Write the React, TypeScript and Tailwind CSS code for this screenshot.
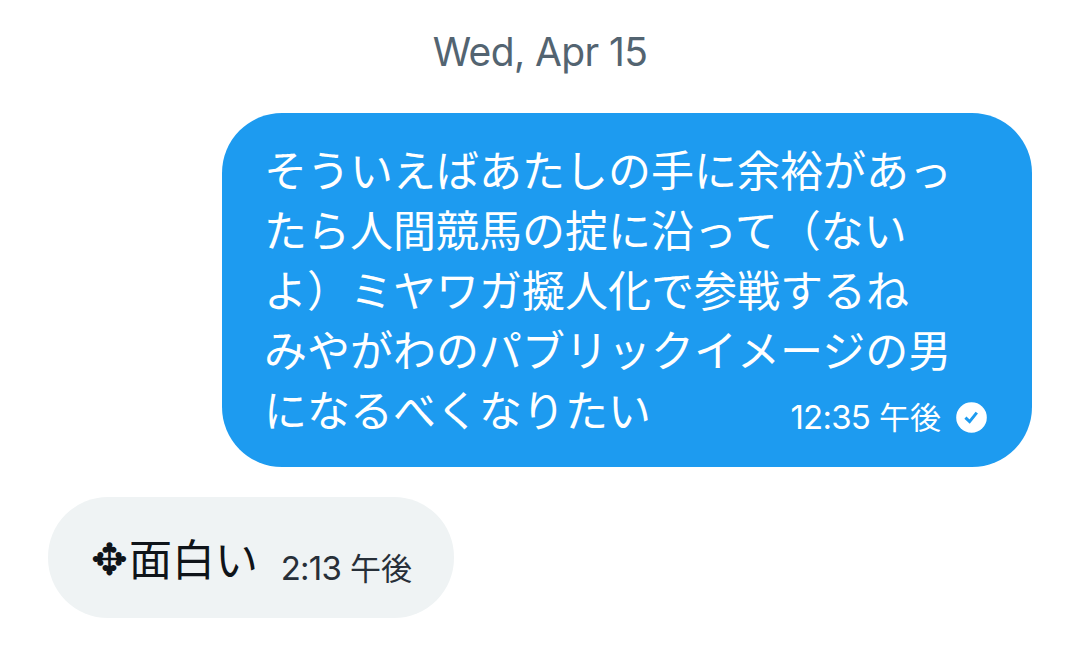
type TimeProps = {
  time: string;
  period: string;
};

const sentLines = [
  'そういえばあたしの手に余裕があっ',
  'たら人間競馬の掟に沿って（ない',
  'よ）ミヤワガ擬人化で参戦するね',
  'みやがわのパブリックイメージの男',
  'になるべくなりたい',
];

function MessageTime({ time, period }: TimeProps) {
  return (
    <span className="flex items-baseline gap-[9px] leading-[43px] whitespace-nowrap">
      <span className="text-[33px] tracking-[-0.8px]">{time}</span>
      <span className="text-[31px]">{period}</span>
    </span>
  );
}

function SentIcon() {
  return (
    <svg className="size-[31px]" viewBox="0 0 31 31" fill="none">
      <circle cx="15.5" cy="15.5" r="15.3" fill="white" />
      <path d="M9.4 15.6 L13.6 19.6 L20.8 10.6" stroke="#1d9bf0" strokeWidth="3" />
    </svg>
  );
}

export default function App() {
  return (
    <main className="flex h-[663px] w-full flex-col overflow-hidden bg-white pt-[30px] font-['Inter','Noto_Sans_CJK_JP',sans-serif]">
      <div className="text-center text-[39px] leading-[43px] tracking-[-0.6px] text-[#536471]">Wed, Apr 15</div>

      {/* Sent message */}
      <div className="mt-10 mr-12 flex h-[354px] w-[810px] items-end justify-between self-end rounded-[60px] bg-[#1d9bf0] pr-[45px] pb-[26px] pl-[42px] text-white">
        <div className="w-0 text-[43px] leading-[60px] whitespace-nowrap">
          {sentLines.map((line) => (
            <div key={line}>{line}</div>
          ))}
        </div>
        <div className="flex items-center gap-[15px] pb-[2px]">
          <MessageTime time="12:35" period="午後" />
          <SentIcon />
        </div>
      </div>

      {/* Received message */}
      <div className="mt-[30px] ml-12 flex h-[121px] w-[406px] items-end justify-between rounded-[60px] bg-[#eff3f4] pr-[42px] pb-[28px] pl-[43px]">
        <div className="flex items-center text-[43px] leading-[60px] whitespace-nowrap text-[#0f1419]">
          <span className="w-[38px] font-['DejaVu_Sans',sans-serif] text-[44px]">✥</span>
          <span>面白い</span>
        </div>
        <div className="text-[#272f38]">
          <MessageTime time="2:13" period="午後" />
        </div>
      </div>
    </main>
  );
}
